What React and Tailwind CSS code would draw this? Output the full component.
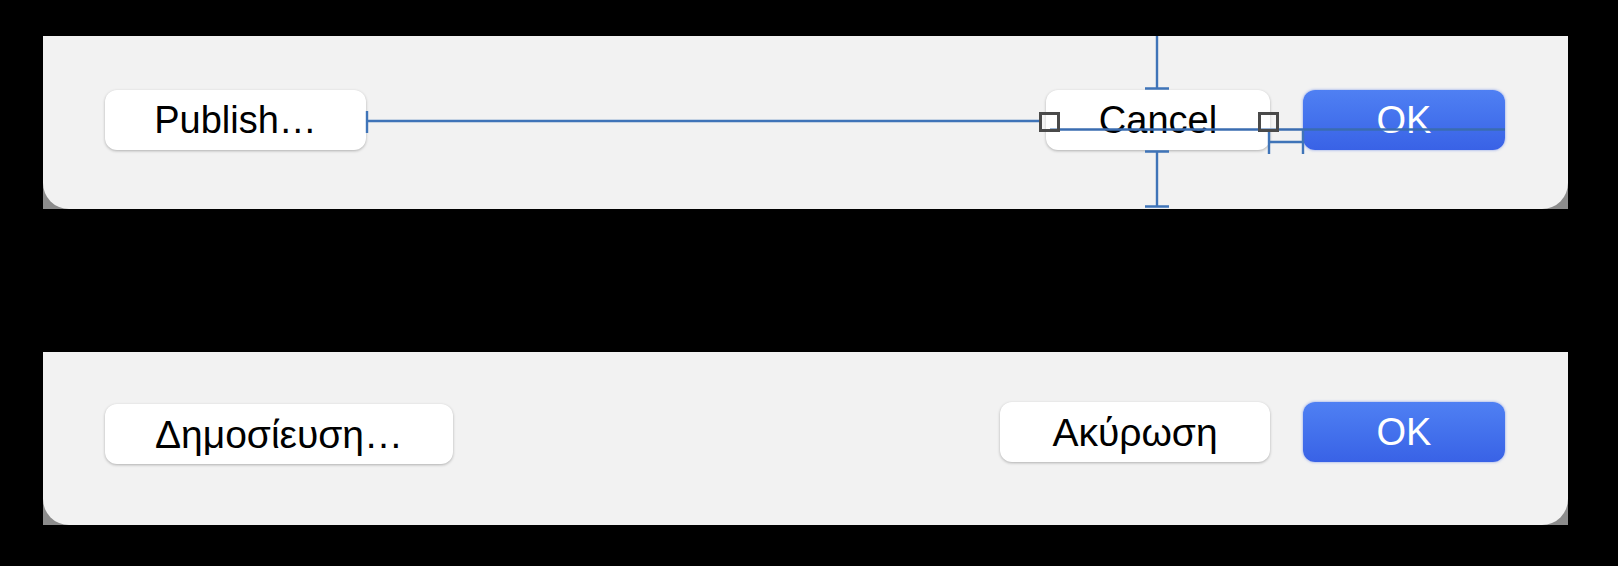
import React from "react";

const font = { fontFamily: '"Liberation Sans", Arial, sans-serif' };

const WhiteButton = ({ label, width, size = "text-[38px]" }) => (
    <div
        className={`${width} ${size} h-[60px] flex items-center justify-center bg-white rounded-[12px] shadow-[0_1px_3px_rgba(0,0,0,0.28)] text-black leading-none`}
    >
        {label}
    </div>
);

const OkButton = () => (
    <div className="w-[202px] h-[60px] flex items-center justify-center rounded-[12px] bg-linear-to-b from-[#4f80f3] to-[#3962e6] shadow-[0_0_3px_rgba(60,100,230,0.6)] text-[38px] text-white leading-none">
        OK
    </div>
);

// panel with the grey backdrop showing through at the rounded bottom corners
const Panel = ({ children }) => (
    <div className="bg-[#8c8c8c]">
        <div className="relative h-[173px] bg-[#f2f2f2] rounded-b-[26px] flex items-start pt-[54px] pl-[62px] pr-[63px]">
            {children}
        </div>
    </div>
);

// layout guides drawn over the first dialog
const Guides = () => (
    <svg className="absolute inset-0 pointer-events-none" width="1525" height="173" viewBox="0 0 1525 173">
        <g stroke="#3f74b8" strokeWidth="2.4" fill="none">
            {/* Publish -> Cancel */}
            <path d="M324 75 V97 M324 85 H997" />
            {/* baseline through Cancel and OK */}
            <path d="M1007 93.5 H1462" stroke="#3a6cb0" />
            {/* above Cancel */}
            <path d="M1114 0 V52.5 M1102 52.5 H1126" />
            {/* below Cancel */}
            <path d="M1114 115.5 V170.5 M1102 115.5 H1126 M1102 170.5 H1126" />
            {/* gap Cancel -> OK */}
            <path d="M1226 94 V118 M1260 94 V118 M1226 106 H1260" />
        </g>
        <g stroke="#4a4a4a" strokeWidth="3" fill="rgba(255,255,255,0.3)">
            <rect x="997.5" y="77.5" width="18" height="17" />
            <rect x="1216.5" y="77.5" width="18" height="17" />
        </g>
    </svg>
);

export default function App() {
    return (
        <div className="w-[1618px] h-[566px] bg-black pt-[36px] pl-[43px] pr-[50px] overflow-hidden" style={font}>
            <Panel>
                <WhiteButton label="Publish…" width="w-[261px]" />
                <div className="flex-1" />
                <div className="flex gap-[33px]">
                    <WhiteButton label="Cancel" width="w-[224px]" />
                    <OkButton />
                </div>
                <Guides />
            </Panel>

            <div className="h-[143px]" />

            <Panel>
                <div className="-mt-[2px]">
                    <WhiteButton label="Δημοσίευση…" width="w-[348px]" size="text-[39px]" />
                </div>
                <div className="flex-1" />
                <div className="flex gap-[33px] -mt-[4px]">
                    <WhiteButton label="Ακύρωση" width="w-[270px]" size="text-[39px]" />
                    <OkButton />
                </div>
            </Panel>
        </div>
    );
}
